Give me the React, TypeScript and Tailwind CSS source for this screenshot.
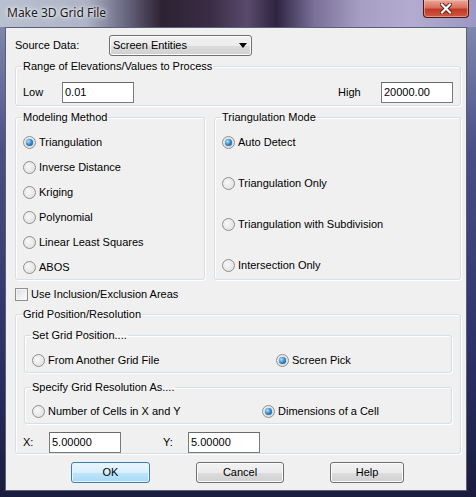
import React from "react";

type RadioProps = { label: string; checked?: boolean; className?: string };

const Radio = ({ label, checked, className = "" }: RadioProps) => (
  <label className={`flex items-center h-[20px] gap-[3px] ${className}`}>
    <span className="w-[13px] h-[13px] shrink-0 rounded-full border border-[#8e8f8f] bg-[radial-gradient(circle_at_40%_40%,#f8f8f8_0%,#e4e4e4_70%,#d4d4d4_100%)] flex items-center justify-center">
      {checked && (
        <span className="w-[7px] h-[7px] rounded-full bg-[radial-gradient(circle_at_35%_35%,#b6e4fb_0%,#3a8fd0_45%,#0d4a86_100%)] shadow-[0_0_1px_#174d7f]" />
      )}
    </span>
    <span className="whitespace-nowrap">{label}</span>
  </label>
);

const Group = ({
  title,
  className = "",
  bodyClass = "",
  children,
}: {
  title: string;
  className?: string;
  bodyClass?: string;
  children: React.ReactNode;
}) => (
  <fieldset
    className={`border border-[#d5dfe5] rounded-[3px] shadow-[inset_1px_1px_0_#ffffff,1px_1px_0_#ffffff] ${className}`}
  >
    <legend className="ml-[6px] px-[1px] leading-[14px]">{title}</legend>
    <div className={bodyClass}>{children}</div>
  </fieldset>
);

const Edit = ({ value }: { value: string }) => (
  <div className="w-[72px] h-[21px] shrink-0 border border-[#7a7a7a] border-t-[#6a6a6a] bg-white pl-[2px] leading-[19px]">
    {value}
  </div>
);

const Button = ({
  label,
  width,
  primary,
}: {
  label: string;
  width: string;
  primary?: boolean;
}) => (
  <button
    type="button"
    className={`${width} h-[21px] rounded-[3px] border text-center leading-[19px] ${
      primary
        ? "border-[#3c7fb1] bg-[linear-gradient(180deg,#eaf6fd_0%,#d9f0fc_50%,#bee6fd_50%,#a7d9f5_100%)] shadow-[inset_0_0_0_1px_#e6f4fc]"
        : "border-[#707070] bg-[linear-gradient(180deg,#f2f2f2_0%,#ebebeb_50%,#dddddd_50%,#cfcfcf_100%)] shadow-[inset_0_0_0_1px_#fbfbfb]"
    }`}
  >
    {label}
  </button>
);

export default function App() {
  return (
    <div className="w-[476px] h-[497px] overflow-hidden bg-[linear-gradient(180deg,#8c94b4_0%,#4a4f86_30%,#2c3168_70%,#1a1c3c_100%)] font-['Liberation_Sans',Arial,sans-serif] text-[11px] text-black">
      {/* title bar */}
      <div className="h-[27px] flex items-start bg-[linear-gradient(90deg,#b9c0cf_0%,#aeb4c6_18%,#6c6a84_26%,#2c2232_34%,#3a2c44_44%,#5a4a6c_52%,#2e2440_58%,#7a7098_66%,#a8a0c4_76%,#b4acd0_86%,#9c98c4_100%)]">
        <span className="pl-[7px] pt-[5px] font-['Noto_Sans',sans-serif] text-[12px] leading-[16px] text-[#1a1a1a] [text-shadow:0_0_6px_#ffffff,0_0_3px_#ffffff]">
          Make 3D Grid File
        </span>
        <div className="ml-auto mr-[7px] w-[46px] h-[18px] rounded-b-[4px] border border-t-0 border-[#4a1810] bg-[linear-gradient(180deg,#e9a99a_0%,#d9705c_45%,#c2382a_55%,#d05a3e_100%)] shadow-[inset_0_0_0_1px_rgba(255,200,190,0.5)] flex items-center justify-center">
          <svg width="12" height="11" viewBox="0 0 12 11">
            <path
              d="M2 1.5 L10 9.5 M10 1.5 L2 9.5"
              stroke="#5a1a14"
              strokeWidth="4"
              strokeLinecap="square"
            />
            <path
              d="M2 1.5 L10 9.5 M10 1.5 L2 9.5"
              stroke="#ffffff"
              strokeWidth="2.2"
              strokeLinecap="square"
            />
          </svg>
        </div>
      </div>

      {/* client area */}
      <div className="ml-[5px] w-[462px] h-[464px] border border-[#5a6078] bg-[#f0f0f0] px-[8px]">
        {/* source */}
        <div className="mt-[7px] flex items-center h-[21px]">
          <span className="w-[95px] pl-[1px]">Source Data:</span>
          <div className="w-[143px] h-[21px] rounded-[3px] border border-[#707070] bg-[linear-gradient(180deg,#f2f2f2_0%,#ebebeb_50%,#dddddd_50%,#cfcfcf_100%)] shadow-[inset_0_0_0_1px_#fbfbfb] flex items-center pl-[3px] pr-[4px]">
            <span>Screen Entities</span>
            <svg className="ml-auto" width="8" height="5" viewBox="0 0 8 5">
              <path d="M0 0 H8 L4 5 Z" fill="#000" />
            </svg>
          </div>
        </div>

        {/* range */}
        <Group
          title="Range of Elevations/Values to Process"
          className="mt-[3px] ml-[1px] w-[446px]"
          bodyClass="pt-[9px] pb-[2px] pl-[7px] pr-[7px] flex items-center"
        >
          <span className="w-[39px]">Low</span>
          <Edit value="0.01" />
          <span className="ml-auto w-[43px]">High</span>
          <Edit value="20000.00" />
        </Group>

        {/* modeling + triangulation */}
        <div className="mt-[4px] ml-[1px] flex gap-[9px] w-[446px]">
          <Group
            title="Modeling Method"
            className="w-[190px]"
            bodyClass="pt-[8px] pb-[2px] pl-[7px] flex flex-col gap-[5px]"
          >
            <Radio label="Triangulation" checked />
            <Radio label="Inverse Distance" />
            <Radio label="Kriging" />
            <Radio label="Polynomial" />
            <Radio label="Linear Least Squares" />
            <Radio label="ABOS" />
          </Group>
          <Group
            title="Triangulation Mode"
            className="w-[247px]"
            bodyClass="pt-[8px] pl-[7px] flex flex-col gap-[21px]"
          >
            <Radio label="Auto Detect" checked />
            <Radio label="Triangulation Only" />
            <Radio label="Triangulation with Subdivision" />
            <Radio label="Intersection Only" />
          </Group>
        </div>

        {/* checkbox */}
        <label className="mt-[8px] ml-[1px] flex items-center h-[13px] gap-[3px]">
          <span className="w-[13px] h-[13px] border border-[#8e8f8f] bg-[linear-gradient(135deg,#dcdcdc_0%,#f0f0f0_60%,#fbfbfb_100%)] shadow-[inset_0_0_0_1px_#f4f4f4]" />
          <span>Use Inclusion/Exclusion Areas</span>
        </label>

        {/* grid position */}
        <Group
          title="Grid Position/Resolution"
          className="mt-[6px] ml-[1px] w-[446px]"
          bodyClass="pt-[7px] pl-[8px]"
        >
          <Group
            title="Set Grid Position...."
            className="w-[428px]"
            bodyClass="pt-[8px] pb-[2px] pl-[7px] flex"
          >
            <Radio label="From Another Grid File" className="w-[244px]" />
            <Radio label="Screen Pick" checked />
          </Group>
          <Group
            title="Specify Grid Resolution As...."
            className="mt-[7px] w-[428px]"
            bodyClass="pt-[7px] pb-[2px] pl-[7px] flex"
          >
            <Radio label="Number of Cells in X and Y" className="w-[230px]" />
            <Radio label="Dimensions of a Cell" checked />
          </Group>
          <div className="mt-[8px] -ml-[1px] flex items-center">
            <span className="w-[26px]">X:</span>
            <Edit value="5.00000" />
            <span className="ml-[42px] w-[25px]">Y:</span>
            <Edit value="5.00000" />
          </div>
        </Group>

        {/* buttons */}
        <div className="mt-[8px] ml-[57px] flex gap-[46px]">
          <Button label="OK" width="w-[79px]" primary />
          <Button label="Cancel" width="w-[88px]" />
          <Button label="Help" width="w-[74px]" />
        </div>
      </div>
    </div>
  );
}
